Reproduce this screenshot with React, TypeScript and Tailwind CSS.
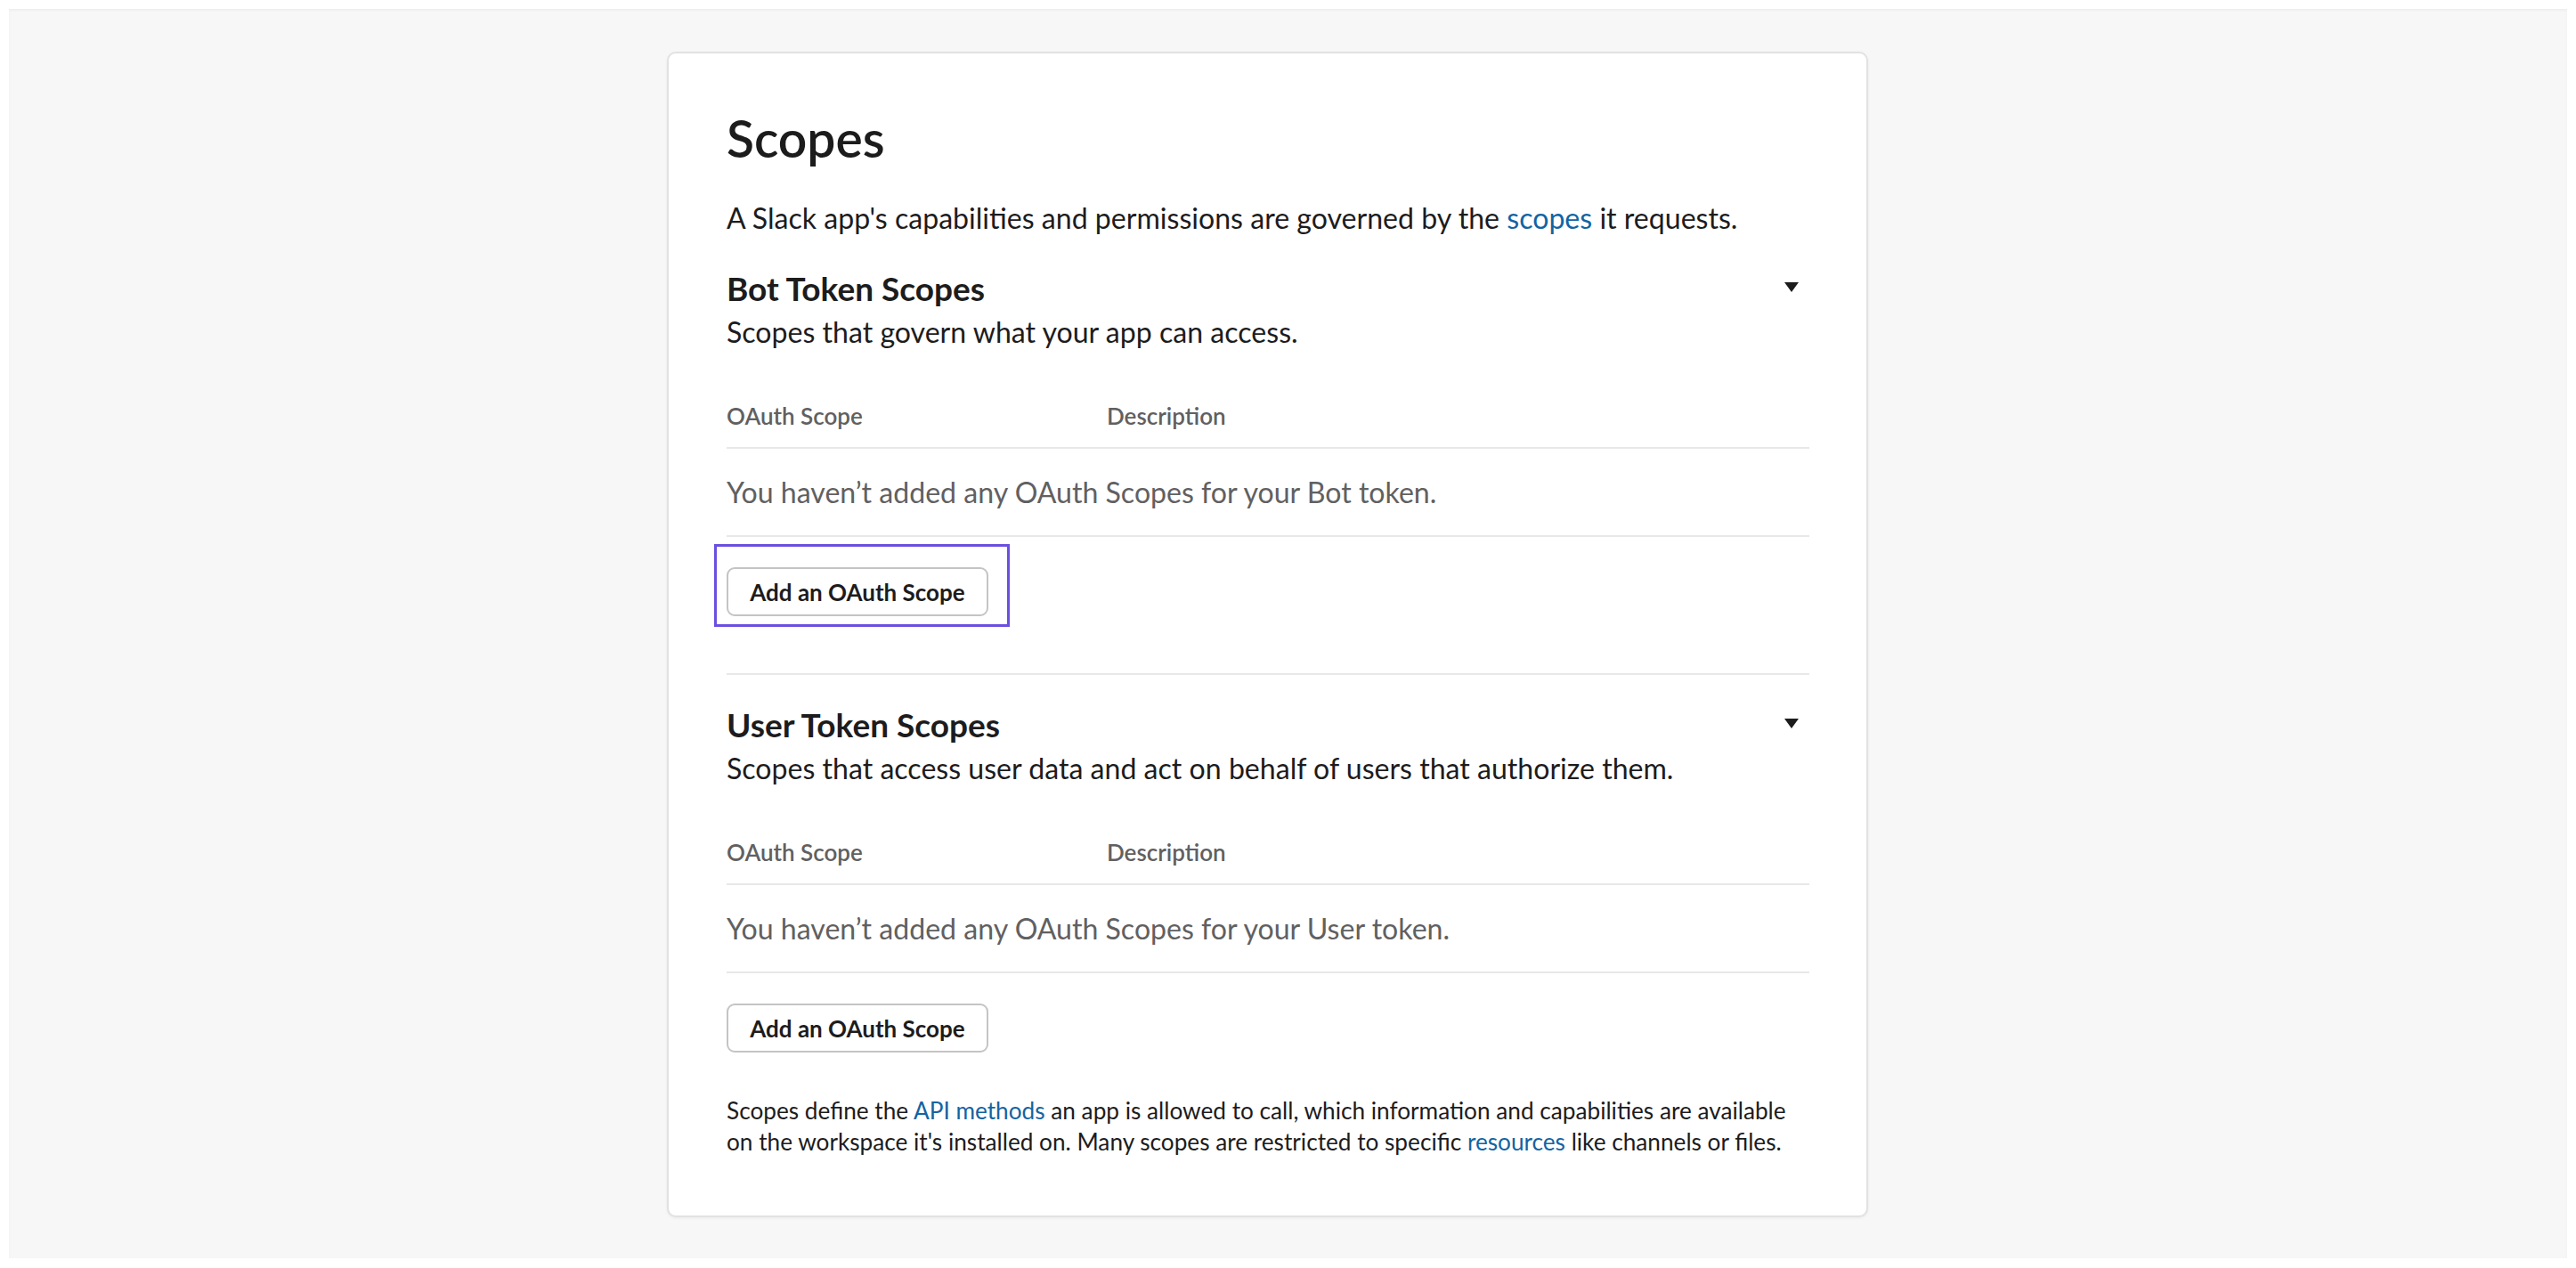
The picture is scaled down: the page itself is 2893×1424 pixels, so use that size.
import React from "react";

const Caret = () => (
  <svg width="16" height="11" viewBox="0 0 16 11" className="mr-3 -mt-1 shrink-0">
    <path d="M0 0 H16 L8 11 Z" fill="#1d1c1d" />
  </svg>
);

const ScopeSection = ({
  title,
  subtitle,
  emptyText,
  highlight,
}: {
  title: string;
  subtitle: string;
  emptyText: string;
  highlight?: boolean;
}) => {
  return (
    <div>
      <div className="flex items-center justify-between">
        <h3 className="text-[37px] leading-[44px] font-bold text-[#1d1c1d]">{title}</h3>
        <Caret />
      </div>
      <p className="mt-[7px] text-[32.1px] leading-[40px] text-[#1d1c1d]">{subtitle}</p>

      <div className="mt-[56px] grid grid-cols-[427px_1fr] border-b-2 border-[#e8e8e8] pb-[17px] text-[26px] leading-[36px] font-semibold text-[#616061]">
        <div>OAuth Scope</div>
        <div>Description</div>
      </div>
      <div className="border-b-2 border-[#e8e8e8] pt-[29px] pb-[28px] text-[32.1px] leading-[40px] text-[#616061]">
        {emptyText}
      </div>

      <div className="relative mt-[34px] w-fit">
        {highlight && (
          <div className="pointer-events-none absolute -left-[14px] -top-[26px] h-[93px] w-[332px] border-[3px] border-[#6b4fe0]" />
        )}
        <button className="flex h-[55px] w-[294px] items-center justify-center rounded-[9px] border-2 border-[#c4c4c4] bg-white text-[26px] leading-[36px] font-bold text-[#1d1c1d]">
          Add an OAuth Scope
        </button>
      </div>
    </div>
  );
};

export default function App() {
  return (
    <div className="min-h-screen bg-white p-[10px] font-['Lato','Noto_Sans',sans-serif]">
      <div className="h-[1403px] bg-[#f7f7f7] pl-[739px] pt-[48px] shadow-[inset_0_2px_3px_rgba(0,0,0,0.04)]">
        <div className="w-[1349px] rounded-[10px] border-2 border-[#e2e2e2] bg-white pl-[65px] pr-[64px] pt-[61px] pb-[65px] shadow-[0_1px_3px_rgba(0,0,0,0.06)]">
          <h1 className="text-[57px] leading-[68px] font-semibold text-[#1d1c1d]">Scopes</h1>
          <p className="mt-[36px] text-[32.1px] leading-[40px] text-[#1d1c1d]">
            A Slack app's capabilities and permissions are governed by the{" "}
            <a className="text-[#1264a3]">scopes</a> it requests.
          </p>

          <div className="mt-[37px] border-b-2 border-[#e8e8e8] pb-[64px]">
            <ScopeSection
              title="Bot Token Scopes"
              subtitle="Scopes that govern what your app can access."
              emptyText="You haven’t added any OAuth Scopes for your Bot token."
              highlight
            />
          </div>

          <div className="pt-[34px]">
            <ScopeSection
              title="User Token Scopes"
              subtitle="Scopes that access user data and act on behalf of users that authorize them."
              emptyText="You haven’t added any OAuth Scopes for your User token."
            />
          </div>

          <p className="mt-[48px] whitespace-nowrap text-[26.2px] leading-[35px] text-[#1d1c1d]">
            Scopes define the <a className="text-[#1264a3]">API methods</a> an app is allowed to call, which
            information and capabilities are available
            <br />
            on the workspace it's installed on. Many scopes are restricted to specific{" "}
            <a className="text-[#1264a3]">resources</a> like channels or files.
          </p>
        </div>
      </div>
    </div>
  );
}
